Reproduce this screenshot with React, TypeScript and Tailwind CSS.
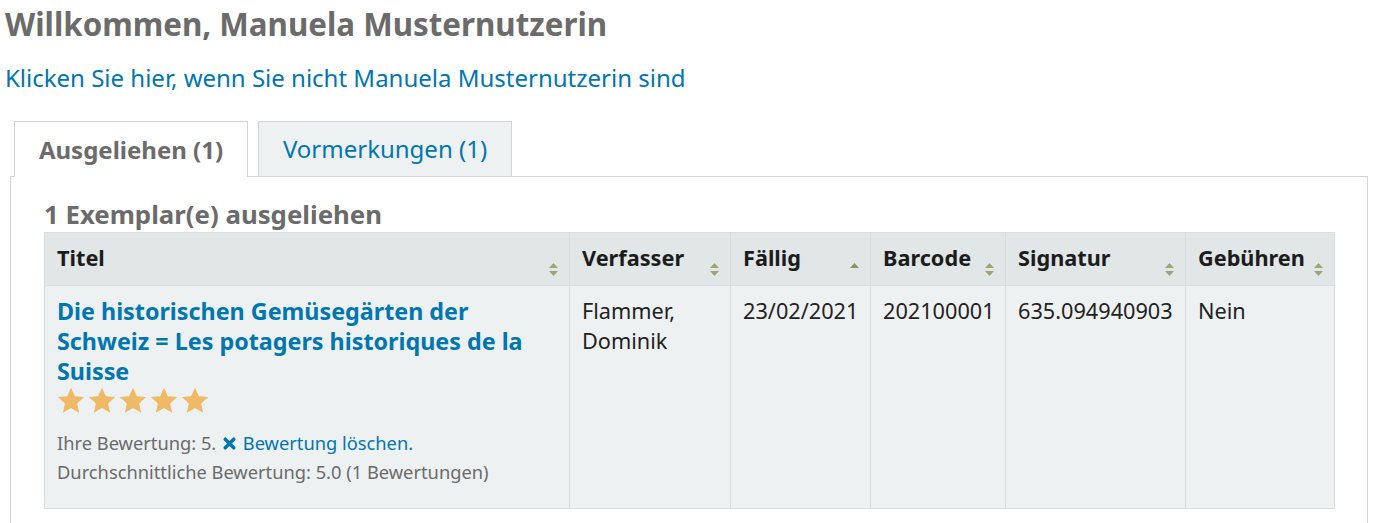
import { X } from 'lucide-react';

const columns = [
  { label: 'Titel', width: 'w-[525px]', sort: 'both' },
  { label: 'Verfasser', width: 'w-[161px]', sort: 'both' },
  { label: 'Fällig', width: 'w-[140px]', sort: 'asc' },
  { label: 'Barcode', width: 'w-[135px]', sort: 'both' },
  { label: 'Signatur', width: 'w-[180px]', sort: 'both' },
  { label: 'Gebühren', width: 'w-[149px]', sort: 'both' },
];

function SortIcon({ mode }: { mode: string }) {
  return (
    <svg width="11" height="15" viewBox="0 0 11 15" className="shrink-0">
      <path d="M5.5 1 L10 6 L1 6 Z" fill={mode === 'asc' ? '#8d9165' : '#9fa476'} />
      {mode === 'both' && <path d="M5.5 14 L10 9 L1 9 Z" fill="#9fa476" />}
    </svg>
  );
}

function Star() {
  return (
    <svg width="28" height="27" viewBox="0 0 24 23">
      <path
        d="M12 0.6 L15.3 7.8 L23.3 8.6 L17.3 14 L19 21.9 L12 17.9 L5 21.9 L6.7 14 L0.7 8.6 L8.7 7.8 Z"
        fill="#f0b965"
      />
    </svg>
  );
}

export default function App() {
  return (
    <div className="w-[1380px] h-[523px] overflow-hidden bg-white font-['Noto_Sans',sans-serif] text-[#222]">
      <div className="px-[5px] pt-[4px]">
        <h1 className="text-[31.3px] leading-[40px] font-bold text-[#6b6b6b]">Willkommen, Manuela Musternutzerin</h1>
        <a className="block mt-[19px] text-[24px] leading-[30px] text-[#0076b2]" href="#">
          Klicken Sie hier, wenn Sie nicht Manuela Musternutzerin sind
        </a>
      </div>

      <div className="ml-[10px] mr-[12px] mt-[28px]">
        {/* Tabs */}
        <div className="flex gap-[10px] pl-[4px]">
          <div className="relative z-10 -mb-px flex h-[56px] w-[234px] items-center justify-center border border-b-0 border-[#d4d4d4] bg-white text-[24px] font-bold text-[#6b6b6b]">
            Ausgeliehen (1)
          </div>
          <div className="flex h-[55px] w-[254px] items-center justify-center border border-b-0 border-[#d4d4d4] bg-[#eef1f2] text-[24px] text-[#0076b2]">
            Vormerkungen (1)
          </div>
        </div>

        {/* Panel */}
        <div className="border border-[#d4d4d4] px-[33px] pt-[21px] pb-[20px]">
          <h2 className="text-[25.8px] leading-[32px] mb-[2px] font-bold text-[#6b6b6b]">1 Exemplar(e) ausgeliehen</h2>
          <table className="table-fixed border-collapse w-[1291px]">
            <thead>
              <tr className="bg-[#e1e6e7]">
                {columns.map((c, i) => (
                  <th
                    key={c.label}
                    className={`${c.width} border border-[#d9dddd] ${i === columns.length - 1 ? 'rounded-tr-[4px]' : ''} p-0 text-left align-top`}
                  >
                    <div className="flex items-end justify-between pl-[12px] pr-[10px] pt-[10px] pb-[8px]">
                      <span className="text-[21.7px] leading-[30px] font-bold text-[#1c1c1c] pb-[4px]">{c.label}</span>
                      <SortIcon mode={c.sort} />
                    </div>
                  </th>
                ))}
              </tr>
            </thead>
            <tbody>
              <tr className="bg-[#eef1f2] text-[21.7px] leading-[30px] align-top">
                <td className="border border-[#d9dddd] pl-[12px] pr-[12px] pt-[10px] pb-[22px]">
                  <a href="#" className="block font-bold text-[23.3px] leading-[30px] text-[#0076b2]">
                    Die historischen Gemüsegärten der Schweiz = Les potagers historiques de la Suisse
                  </a>
                  <div className="flex gap-[3px] mt-[1px]">
                    <Star />
                    <Star />
                    <Star />
                    <Star />
                    <Star />
                  </div>
                  <div className="mt-[14px] text-[18.3px] leading-[29px] text-[#6b6b6b]">
                    <div>
                      Ihre Bewertung: 5.{' '}
                      <a href="#" className="text-[#0076b2]">
                        <X className="inline-block w-[17px] h-[17px] align-[-2px]" strokeWidth={5} /> Bewertung löschen.
                      </a>
                    </div>
                    <div>Durchschnittliche Bewertung: 5.0 (1 Bewertungen)</div>
                  </div>
                </td>
                <td className="border border-[#d9dddd] px-[12px] pt-[10px]">Flammer, Dominik</td>
                <td className="border border-[#d9dddd] px-[12px] pt-[10px]">23/02/2021</td>
                <td className="border border-[#d9dddd] px-[12px] pt-[10px]">202100001</td>
                <td className="border border-[#d9dddd] px-[12px] pt-[10px]">635.094940903</td>
                <td className="border border-[#d9dddd] px-[12px] pt-[10px]">Nein</td>
              </tr>
            </tbody>
          </table>
        </div>
      </div>
    </div>
  );
}
